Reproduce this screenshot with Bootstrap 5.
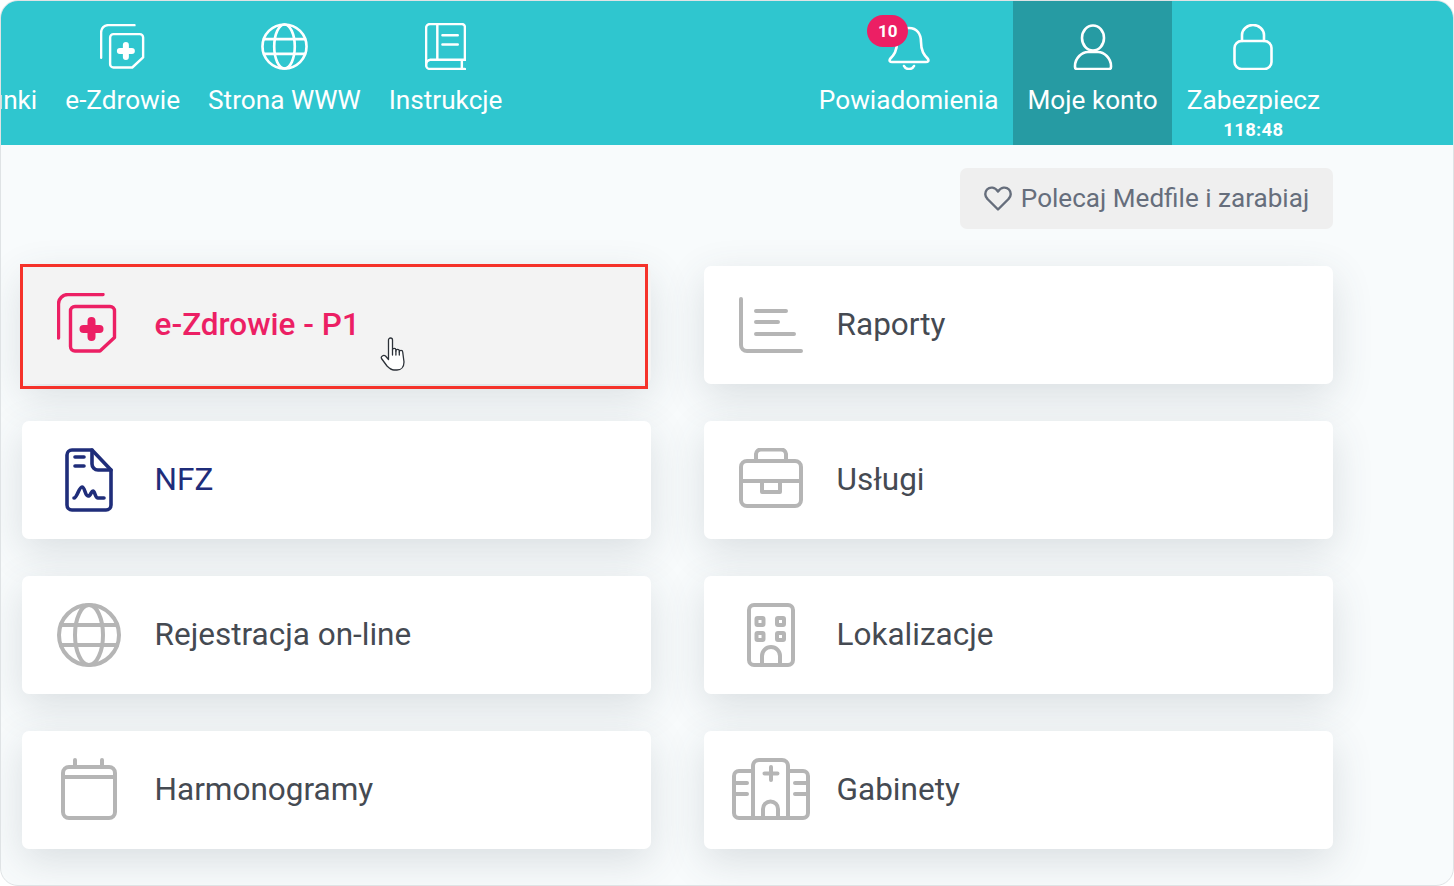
<!DOCTYPE html>
<html lang="pl">
<head>
    <meta charset="UTF-8">
    <meta name="viewport" content="width=device-width, initial-scale=1.0">
    <title>Medfile - Moje konto</title>
    <link rel="stylesheet" href="https://cdn.jsdelivr.net/npm/bootstrap@5.3.0/dist/css/bootstrap.min.css">
    <style>
        html, body { height: 100%; background: #fff; overflow: hidden; }
        body { font-family: Roboto, "Liberation Sans", sans-serif; }
        svg { fill: none; stroke: currentColor; stroke-linecap: round; stroke-linejoin: round; display: block; flex: none; }

        .app-frame { height: 886px; border: 1px solid #dfe3e5; border-radius: 18px; overflow: hidden; background: #f8fbfc; }

        .top-strip { height: 144px; background: #2fc6cf; color: #fff; }
        .strip-left { width: 515.5px; overflow: hidden; }
        .strip-left .strip-item { padding-left: 14px; padding-right: 14px; }
        .strip-right { margin-right: 118.5px; }
        .strip-item { flex: none; height: 144px; padding: 22px 14.5px 0; color: #fff; text-decoration: none; text-align: center; font-size: 26.2px; line-height: 1; display: flex; flex-direction: column; align-items: center; position: relative; }
        .strip-item.current { background: #269ba3; }
        .strip-icon { height: 47px; margin-bottom: 17px; display: flex; align-items: center; justify-content: center; }
        .strip-time { font-size: 18.5px; font-weight: 700; margin-top: 8px; letter-spacing: .3px; }
        .alert-count { position: absolute; top: 14px; left: 63px; width: 41px; height: 32px; border-radius: 16px; background: #ec1f64; color: #fff; font-size: 17px; font-weight: 700; display: flex; align-items: center; justify-content: center; }

        .main-area { width: 1311px; margin-left: 21px; padding-top: 23px; }
        .refer-btn { width: 373px; height: 61px; background: #efefef; border: 0; border-radius: 7px; color: #666e7c; font-size: 26.1px; display: flex; align-items: center; justify-content: center; gap: 9px; padding: 0; }
        .refer-btn:hover { background: #efefef; color: #666e7c; }

        .tile-grid { display: grid; grid-template-columns: 629px 629px; column-gap: 53px; row-gap: 37px; margin-top: 37px; }
        .tile { height: 118px; border: 0; border-radius: 7px; background: #fff; box-shadow: 0 12px 40px rgba(60, 75, 85, .16); color: #454a52; font-size: 31.5px; flex-direction: row; align-items: center; text-decoration: none; padding-left: 35px; position: relative; }
        .tile-icon { width: 64px; margin-right: 33.6px; display: flex; justify-content: center; flex: none; color: #b5b5b5; }
        .tile.picked { background: #f3f3f3; color: #ec1f64; font-weight: 500; }
        .tile.picked .tile-icon { color: #ec1f64; }
        .tile.navy { color: #1f2d7a; }
        .tile.navy .tile-icon { color: #1f2d7a; }
        .lift-more { margin-top: -5px; }
        .lift-less { margin-top: -2px; }
        .pick-outline { position: absolute; left: -2px; top: -2px; width: 628px; height: 125px; border: 3px solid #f5322a; pointer-events: none; }
        .hand-cursor { position: absolute; left: 358px; top: 71px; color: #2c3138; }
    </style>
</head>
<body>
    <svg width="0" height="0" class="position-absolute">
        <symbol id="i-health" viewBox="0 0 60 60">
            <path d="M1.5 45V11A9.5 9.5 0 0 1 11 1.5H46"/>
            <path d="M18 13.5H53A4.5 4.5 0 0 1 57.5 18V44.5L43 58H18A4.5 4.5 0 0 1 13.5 53.5V18A4.5 4.5 0 0 1 18 13.5Z"/>
            <path d="M34.5 28V44M26.500 36H42.500" stroke-width="8"/>
        </symbol>
        <symbol id="i-globe" viewBox="0 0 64 64">
            <circle cx="32" cy="32" r="30"/>
            <ellipse cx="32" cy="32" rx="14" ry="30"/>
            <path d="M4 22H60M4 42H60"/>
        </symbol>
        <symbol id="i-book" viewBox="0 0 40 46">
            <path d="M39 36V4A3 3 0 0 0 36 1H5A4 4 0 0 0 1 5V41A4 4 0 0 0 5 45H39"/>
            <path d="M12 1V36M5 36A4.5 4.5 0 0 0 1 41M5 36H39M36 36V45M17 12H32M17 21H32"/>
        </symbol>
        <symbol id="i-bell" viewBox="0 0 42 46">
            <path d="M21 4C13 4 9 10 9 18C9 27 6 31 2 35C1 37 2 38 4 38H38C40 38 41 37 40 35C36 31 33 27 33 18C33 10 29 4 21 4Z"/>
            <path d="M16 42C18 46 24 46 26 42"/>
        </symbol>
        <symbol id="i-user" viewBox="0 0 40 46">
            <ellipse cx="20" cy="14" rx="11" ry="12.5"/>
            <path d="M2 42C2 34 9 28 15 28H25C31 28 38 34 38 42V43A2 2 0 0 1 36 45H4A2 2 0 0 1 2 43Z"/>
        </symbol>
        <symbol id="i-lock" viewBox="0 0 40 46">
            <rect x="1.5" y="17" width="37" height="28" rx="7"/>
            <path d="M9 17V11A11 10 0 0 1 31 11V17"/>
        </symbol>
        <symbol id="i-report" viewBox="0 0 64 56">
            <path d="M2 2V48A6 6 0 0 0 8 54H62"/>
            <path d="M17 14H47M17 25H39M17 37H55"/>
        </symbol>
        <symbol id="i-case" viewBox="0 0 64 60">
            <rect x="2" y="13" width="60" height="45" rx="6"/>
            <path d="M17 13V6A5 5 0 0 1 22 1.5H42A5 5 0 0 1 47 6V13M2 33H62"/>
            <path d="M23 33V44H41V33"/>
        </symbol>
        <symbol id="i-doc" viewBox="0 0 48 64">
            <path d="M7 2H27L46 22V57A5 5 0 0 1 41 62H7A5 5 0 0 1 2 57V7A5 5 0 0 1 7 2Z"/>
            <path d="M27 2V16A6 6 0 0 0 33 22H46"/>
            <path d="M10 9H19M10 18H19"/>
            <path d="M9 50C12 50 14 39 17 39C20 39 20 48 23 48C26 48 26 43 28 43C30 43 30 50 33 50H39"/>
        </symbol>
        <symbol id="i-office" viewBox="0 0 48 64">
            <rect x="2" y="2" width="44" height="60" rx="5"/>
            <rect x="9.5" y="15" width="7" height="7" rx="1"/>
            <rect x="30" y="15" width="7" height="7" rx="1"/>
            <rect x="9.5" y="30" width="7" height="7" rx="1"/>
            <rect x="30" y="30" width="7" height="7" rx="1"/>
            <path d="M15 62V53A9 9 0 0 1 33 53V62"/>
        </symbol>
        <symbol id="i-clinic" viewBox="0 0 78 62">
            <path d="M21 60V8A6 6 0 0 1 27 2H50A6 6 0 0 1 56 8V60"/>
            <path d="M21 13H7A5 5 0 0 0 2 18V55A5 5 0 0 0 7 60H71A5 5 0 0 0 76 55V18A5 5 0 0 0 71 13H56"/>
            <path d="M2 25H15M2 36H15M63 25H76M63 36H76M39 9V22M32.500 15.500H45.500"/>
            <path d="M31 60V51A7.500 7.500 0 0 1 46 51V60"/>
        </symbol>
        <symbol id="i-calendar" viewBox="0 0 56 62">
            <rect x="2" y="9" width="52" height="51" rx="6"/>
            <path d="M2 19H54M14 2V9M41 2V9"/>
        </symbol>
    </svg>

    <div class="app-frame">
        <div class="top-strip d-flex justify-content-between">
            <nav class="strip-left d-flex justify-content-end">
                <a class="strip-item" href="#"><span class="strip-icon"></span>Rachunki</a>
                <a class="strip-item" href="#">
                    <span class="strip-icon"><svg width="45" height="45" stroke-width="3.200"><use href="#i-health"/></svg></span>e-Zdrowie
                </a>
                <a class="strip-item" href="#">
                    <span class="strip-icon"><svg width="47" height="47" stroke-width="3.600"><use href="#i-globe"/></svg></span>Strona WWW
                </a>
                <a class="strip-item" href="#">
                    <span class="strip-icon"><svg width="41" height="47" stroke-width="2.400"><use href="#i-book"/></svg></span>Instrukcje
                </a>
            </nav>
            <nav class="strip-right d-flex">
                <a class="strip-item" href="#">
                    <span class="strip-icon"><svg width="42" height="46" stroke-width="2.600"><use href="#i-bell"/></svg></span>Powiadomienia
                    <span class="alert-count">10</span>
                </a>
                <a class="strip-item current" href="#">
                    <span class="strip-icon"><svg width="40" height="46" stroke-width="2.600"><use href="#i-user"/></svg></span>Moje konto
                </a>
                <a class="strip-item" href="#">
                    <span class="strip-icon"><svg width="40" height="46" stroke-width="2.600"><use href="#i-lock"/></svg></span>Zabezpiecz
                    <span class="strip-time">118:48</span>
                </a>
            </nav>
        </div>

        <div class="main-area">
            <div class="d-flex justify-content-end">
                <button type="button" class="btn refer-btn">
                    <svg width="28" height="25" viewBox="0 0 28 25" stroke-width="2.400"><path d="M14 23.500L3.500 13A6.800 6.800 0 0 1 3 3.500C6 .5 11 1 14 5.500C17 1 22 .5 25 3.500A6.800 6.800 0 0 1 24.500 13Z"/></svg>
                    Polecaj Medfile i zarabiaj
                </button>
            </div>

            <div class="tile-grid">
                <a class="card tile picked" href="#">
                    <span class="tile-icon lift-more"><svg width="60" height="60" stroke-width="3.400" class="me-1"><use href="#i-health"/></svg></span>
                    e-Zdrowie - P1
                    <span class="pick-outline"></span>
                    <svg class="hand-cursor" width="25" height="34" viewBox="0 0 25 34" stroke-width="1.300">
                        <path fill="#fff" d="M8.500 22.500V3A2 2 0 0 1 12.500 3V13A1.700 1.700 0 0 1 15.900 13V14A1.700 1.700 0 0 1 19.300 14V15A1.700 1.700 0 0 1 22.700 15L24 25C24 30 21 33 17 33H14C11 33 9 31 7 29L1.500 21.500C.5 19.500 3.500 17.500 5.500 19Z"/>
                        <path d="M12.500 13V18M15.900 14V18M19.300 15V18"/>
                    </svg>
                </a>
                <a class="card tile" href="#">
                    <span class="tile-icon"><svg width="64" height="56" stroke-width="4"><use href="#i-report"/></svg></span>
                    Raporty
                </a>
                <a class="card tile navy" href="#">
                    <span class="tile-icon"><svg width="48" height="64" stroke-width="3.600"><use href="#i-doc"/></svg></span>
                    NFZ
                </a>
                <a class="card tile" href="#">
                    <span class="tile-icon lift-more"><svg width="64" height="60" stroke-width="4"><use href="#i-case"/></svg></span>
                    Usługi
                </a>
                <a class="card tile" href="#">
                    <span class="tile-icon"><svg width="64" height="64" stroke-width="4"><use href="#i-globe"/></svg></span>
                    Rejestracja on-line
                </a>
                <a class="card tile" href="#">
                    <span class="tile-icon"><svg width="48" height="64" stroke-width="4"><use href="#i-office"/></svg></span>
                    Lokalizacje
                </a>
                <a class="card tile" href="#">
                    <span class="tile-icon lift-less"><svg width="56" height="62" stroke-width="4"><use href="#i-calendar"/></svg></span>
                    Harmonogramy
                </a>
                <a class="card tile" href="#">
                    <span class="tile-icon lift-less"><svg width="78" height="62" stroke-width="4"><use href="#i-clinic"/></svg></span>
                    Gabinety
                </a>
            </div>
        </div>
    </div>
    <script src="https://cdn.jsdelivr.net/npm/bootstrap@5.3.0/dist/js/bootstrap.bundle.min.js"></script>
</body>
</html>
